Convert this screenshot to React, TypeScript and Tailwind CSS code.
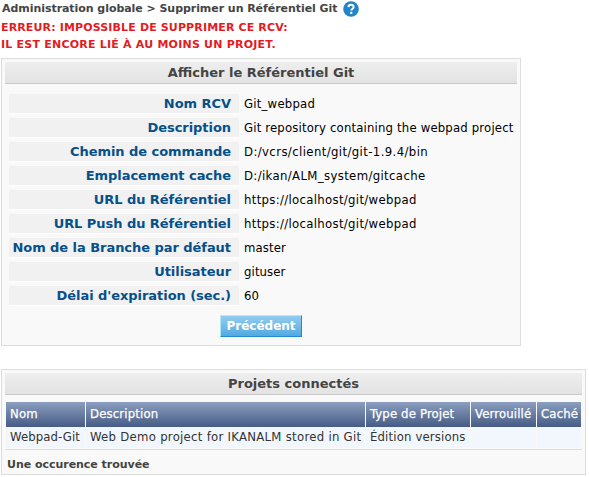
const bold = "font-['DejaVu_Sans',Verdana,sans-serif] font-bold";
const regular = "font-['DejaVu_Sans_Condensed','DejaVu_Sans',Tahoma,sans-serif] [font-stretch:condensed]";

const fields = [
  { label: 'Nom RCV', value: 'Git_webpad', tracking: 'tracking-[0.22px]' },
  { label: 'Description', value: 'Git repository containing the webpad project', tracking: 'tracking-[0.17px]' },
  { label: 'Chemin de commande', value: 'D:/vcrs/client/git/git-1.9.4/bin', tracking: 'tracking-[0.39px]' },
  { label: 'Emplacement cache', value: 'D:/ikan/ALM_system/gitcache', tracking: 'tracking-[0.36px]' },
  { label: 'URL du Référentiel', value: 'https://localhost/git/webpad', tracking: 'tracking-[0.32px]' },
  { label: 'URL Push du Référentiel', value: 'https://localhost/git/webpad', tracking: 'tracking-[0.32px]' },
  { label: 'Nom de la Branche par défaut', value: 'master', tracking: 'tracking-[0.1px]' },
  { label: 'Utilisateur', value: 'gituser', tracking: 'tracking-[0.1px]' },
  { label: "Délai d'expiration (sec.)", value: '60', tracking: 'tracking-normal' },
];

const columns = [
  { title: 'Nom', value: 'Webpad-Git', tracking: 'tracking-[0.1px]' },
  { title: 'Description', value: 'Web Demo project for IKANALM stored in Git', tracking: 'tracking-[0.28px]' },
  { title: 'Type de Projet', value: 'Édition versions', tracking: 'tracking-[0.15px]' },
  { title: 'Verrouillé', value: '', tracking: 'tracking-normal' },
  { title: 'Caché', value: '', tracking: 'tracking-normal' },
];

function PanelTitle({ children }: { children: string }) {
  return (
    <h2 className={`${bold} flex h-[22px] items-center justify-center border-b border-[#c9c9c9] bg-linear-to-b from-[#eeeeee] to-[#e3e3e3] text-[13px] text-[#444]`}>
      {children}
    </h2>
  );
}

function HelpIcon() {
  return (
    <svg viewBox="0 0 16 16" className="size-4" aria-label="Aide">
      <circle cx="8" cy="8" r="7.8" fill="#2284c6" />
      <path d="M5.4 6.1C5.5 4.5 6.5 3.7 8 3.7c1.6 0 2.6.9 2.6 2.2 0 1.8-2.3 1.8-2.3 3.7" fill="none" stroke="#fff" strokeWidth="1.9" />
      <rect x="7.2" y="10.8" width="2.1" height="2.1" fill="#fff" />
    </svg>
  );
}

export default function App() {
  return (
    <main className="h-[477px] w-[589px] overflow-hidden bg-white pl-px whitespace-nowrap">
      <header className={`${bold} h-[58px] pl-px text-[11px]`}>
        <div className="flex h-[18px] items-center gap-1.5 text-[#444]">
          <h1 className="w-[335px] pt-px tracking-[-0.05px]">Administration globale &gt; Supprimer un Référentiel Git</h1>
          <HelpIcon />
        </div>
        <p className="-ml-px h-[17px] leading-[20px] tracking-[0.14px] text-[#e31b23]">ERREUR: IMPOSSIBLE DE SUPPRIMER CE RCV:</p>
        <p className="-ml-px h-[17px] leading-[20px] tracking-[0.22px] text-[#e31b23]">IL EST ENCORE LIÉ À AU MOINS UN PROJET.</p>
      </header>

      <section className="h-[288px] w-[520px] border border-[#dcdcdc] bg-[#f9f9f9] p-[3px]">
        <PanelTitle>Afficher le Référentiel Git</PanelTitle>
        <dl className="flex flex-col gap-1 pt-[10px] pl-1">
          {fields.map((f) => (
            <div key={f.label} className="flex h-5 items-center">
              <dt className={`${bold} h-5 w-[230px] border-b border-white bg-[#f1f1f1] pr-2 text-right text-[13px] leading-[19px] tracking-[-0.05px] text-[#06508a]`}>
                {f.label}
              </dt>
              <dd className={`${regular} ${f.tracking} pl-[5px] text-[13px] leading-5 text-black`}>{f.value}</dd>
            </div>
          ))}
        </dl>
        <div className="flex justify-center pt-[9px]">
          <button className={`${bold} h-[22px] w-[82px] border border-t-[#aeeafa] border-r-[#2389d0] border-b-[#2389d0] border-l-[#aeeafa] bg-linear-to-b from-[#92cdf0] to-[#50aae0] text-[12px] leading-5 text-white`}>
            Précédent
          </button>
        </div>
      </section>

      <section className="mt-[23px] h-[106px] w-[585px] border border-[#dcdcdc] bg-[#f9f9f9] p-[3px]">
        <PanelTitle>Projets connectés</PanelTitle>
        <div className="mx-px mt-[7px] grid grid-cols-[79px_279px_104px_65px_44px] gap-x-px">
          {columns.map((c) => (
            <div key={c.title} className={`${regular} h-[25px] bg-linear-to-b from-[#8c9fc0] to-[#475c85] pl-1 text-[13px] leading-6 tracking-[0.15px] text-white [-webkit-text-stroke:0.25px_white]`}>
              {c.title}
            </div>
          ))}
          {columns.map((c) => (
            <div key={c.title} className={`${regular} ${c.tracking} h-[21px] bg-[#f2f7fd] pl-1 text-[13px] leading-5 text-[#333]`}>
              {c.value}
            </div>
          ))}
        </div>
        <p className={`${bold} mt-px border-t border-[#dcdcdc] pl-[2px] text-[11px] leading-[29px] tracking-[-0.03px] text-[#444]`}>Une occurence trouvée</p>
      </section>
    </main>
  );
}
